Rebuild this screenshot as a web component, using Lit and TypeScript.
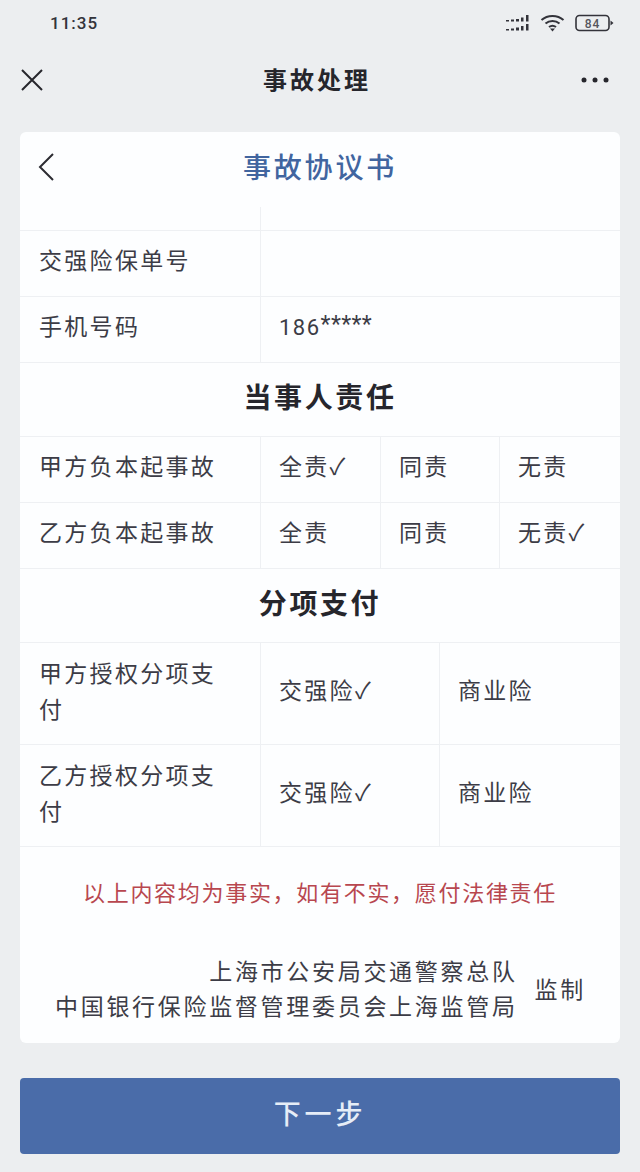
import { LitElement, html, css } from "lit";
import { customElement } from "lit/decorators.js";

@customElement("app-root")
export class AppRoot extends LitElement {
  static styles = css`
    * { box-sizing: border-box; }
    :host { display: block; width: 640px; height: 1172px; overflow: hidden; background: #eceef0; font-family: "Noto Sans CJK SC", "Noto Sans", sans-serif; color: #3a3a44; }
    .status { height: 46px; display: flex; align-items: center; justify-content: space-between; padding: 0 25px 0 50px; font: 500 17px/1 "Roboto", sans-serif; letter-spacing: 1px; color: #33333a; }
    .status-icons { display: flex; align-items: center; gap: 10px; }
    .status svg { display: block; }
    .nav { height: 86px; display: flex; align-items: center; justify-content: space-between; padding: 0 30px 0 20px; }
    .nav-title { font-size: 24px; font-weight: 700; letter-spacing: 3px; color: #26262c; line-height: 30px; margin: -20px 0 0 10px; }
    .nav svg { display: block; margin-top: -18px; }
    .card { margin: 0 20px; width: 600px; height: 911px; background: #fdfeff; border-radius: 6px; display: flex; flex-direction: column; }
    .head { height: 75px; position: relative; display: flex; align-items: center; justify-content: center; padding-bottom: 8px; font-size: 28px; font-weight: 500; letter-spacing: 2.8px; color: #41659f; }
    .head svg { position: absolute; left: 17px; top: 20px; }
    .spacer { height: 23px; width: 241px; border-right: 1px solid #eef0f3; }
    .row { display: grid; border-top: 1px solid #eef0f3; font-size: 23px; letter-spacing: 2.3px; color: #3c3c46; }
    .row > div { display: flex; align-items: center; padding: 0 0 9px 18px; border-left: 1px solid #eef0f3; }
    .row > div:first-child { border-left: 0; padding-left: 19px; }
    .r66 { height: 66px; }
    .r102 { height: 102px; }
    .two { grid-template-columns: 240px 360px; }
    .three { grid-template-columns: 240px 120px 119px 121px; }
    .four { grid-template-columns: 240px 179px 181px; }
    .row > .label-wrap { line-height: 36px; padding: 0 30px 7px 19px; }
    .row > .phone { font: 22px "Roboto", sans-serif; letter-spacing: 1.5px; padding-bottom: 4px; }
    .stars { font-size: 23px; letter-spacing: 0.4px; position: relative; top: -3px; }
    .section { height: 74px; border-top: 1px solid #eef0f3; display: flex; align-items: center; justify-content: center; padding-bottom: 7px; font-size: 28px; font-weight: 700; letter-spacing: 2.6px; color: #26262c; }
    .notice { border-top: 1px solid #eef0f3; height: 94px; display: flex; align-items: center; justify-content: center; padding-bottom: 5px; font-size: 22px; letter-spacing: 1.7px; color: #b8474f; white-space: nowrap; }
    .org { display: flex; align-items: center; justify-content: flex-end; gap: 17px; padding: 0 34px 0 0; margin-top: 13px; font-size: 23px; letter-spacing: 2.7px; line-height: 35px; color: #3c3c46; }
    .org-lines { text-align: right; }
    .btn { margin: 35px 20px 0; width: 600px; height: 76px; padding-bottom: 7px; border-radius: 4px; background: #4a6ca9; color: #e6edf7; font-size: 27px; font-weight: 500; letter-spacing: 3.8px; display: flex; align-items: center; justify-content: center; }
  `;

  private tick = "✓";

  render() {
    return html`
      <div class="status">
        <span>11:35</span>
        <div class="status-icons">
          <svg width="24" height="16" viewBox="0 0 24 16" fill="#33333a">
            <rect x="0" y="5" width="3" height="1.500"/><rect x="5" y="4.500" width="3" height="2"/><rect x="10" y="4" width="3" height="2.500"/><rect x="15" y="2.500" width="2.500" height="4"/><rect x="20" y="0" width="2.500" height="6.500"/>
            <rect x="0" y="14" width="3" height="1.500"/><rect x="5" y="13.500" width="3" height="2"/><rect x="10" y="12.500" width="3" height="3"/><rect x="15" y="11" width="2.500" height="4.500"/><rect x="20" y="9" width="2.500" height="6.500"/>
          </svg>
          <svg width="25" height="18" viewBox="0 0 25 18" fill="none" stroke="#33333a" stroke-width="2">
            <path d="M1.500 6 C7.500 0.500 17.500 0.500 23.500 6"/>
            <path d="M5.500 9.500 C9.500 6 15.500 6 19.500 9.500"/>
            <path d="M9 13 C11 11.500 14 11.500 16 13"/>
            <path d="M12.500 17.500 L10 14.500 H15 Z" fill="#33333a" stroke="none"/>
          </svg>
          <svg width="40" height="18" viewBox="0 0 40 18">
            <rect x="1" y="1.500" width="33" height="15" rx="3.500" fill="none" stroke="#33333a" stroke-width="1.600"/>
            <path d="M35.500 6.500 L38.500 9 L35.500 11.500 Z" fill="#33333a"/>
            <text x="17.500" y="14" text-anchor="middle" font-size="12" font-family="Roboto, sans-serif" fill="#55555c">84</text>
          </svg>
        </div>
      </div>
      <div class="nav">
        <svg width="24" height="24" viewBox="0 0 24 24" fill="none" stroke="#26262c" stroke-width="2"><path d="M2 2 L22 22 M22 2 L2 22"/></svg>
        <span class="nav-title">事故处理</span>
        <svg width="30" height="8" viewBox="0 0 30 8" fill="#26262c"><circle cx="4" cy="4" r="2.500"/><circle cx="15" cy="4" r="2.500"/><circle cx="26" cy="4" r="2.500"/></svg>
      </div>
      <div class="card">
        <div class="head">
          <svg width="18" height="30" viewBox="0 0 18 30" fill="none" stroke="#2c2c32" stroke-width="2"><path d="M16 2 L3 15 L16 28"/></svg>
          事故协议书
        </div>
        <div class="spacer"></div>
        <div class="row two r66"><div>交强险保单号</div><div></div></div>
        <div class="row two r66"><div>手机号码</div><div class="phone">186<span class="stars">*****</span></div></div>
        <div class="section">当事人责任</div>
        <div class="row three r66"><div>甲方负本起事故</div><div>全责${this.tick}</div><div>同责</div><div>无责</div></div>
        <div class="row three r66"><div>乙方负本起事故</div><div>全责</div><div>同责</div><div>无责${this.tick}</div></div>
        <div class="section">分项支付</div>
        <div class="row four r102"><div class="label-wrap">甲方授权分项支付</div><div>交强险${this.tick}</div><div>商业险</div></div>
        <div class="row four r102"><div class="label-wrap">乙方授权分项支付</div><div>交强险${this.tick}</div><div>商业险</div></div>
        <div class="notice">以上内容均为事实，如有不实，愿付法律责任</div>
        <div class="org">
          <div class="org-lines">上海市公安局交通警察总队<br />中国银行保险监督管理委员会上海监管局</div>
          <div>监制</div>
        </div>
      </div>
      <div class="btn">下一步</div>
    `;
  }
}
